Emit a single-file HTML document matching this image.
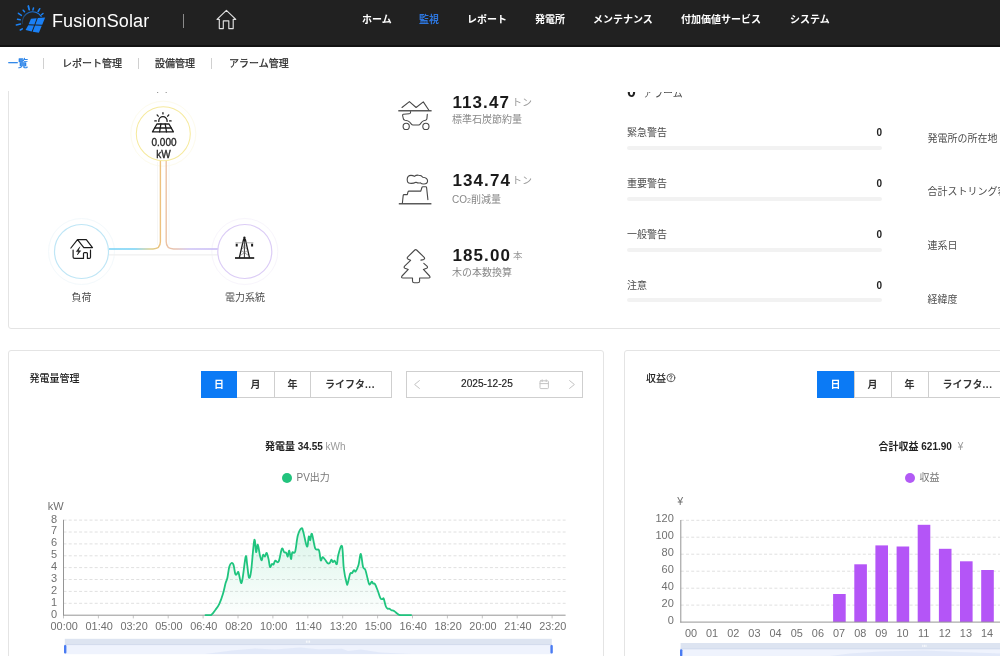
<!DOCTYPE html>
<html lang="ja">
<head>
<meta charset="utf-8">
<title>FusionSolar</title>
<style>
*{box-sizing:border-box;margin:0;padding:0}
html,body{width:1000px;height:656px;overflow:hidden;background:#fff}
body{position:relative;will-change:transform;font-family:"Liberation Sans","Noto Sans CJK JP",sans-serif;font-size:10px;color:#333;line-height:1}
.abs{position:absolute;white-space:nowrap}
#hdr{position:absolute;left:0;top:0;width:1000px;height:47px;background:#212121;border-bottom:2px solid #121212}
#hdr .nav{position:absolute;top:14px;height:12px;line-height:12px;color:#fff;font-weight:bold;font-size:10px;white-space:nowrap}
#hdr .nav.on{color:#2d76de}
#logo-text{position:absolute;left:52px;top:10.2px;font-size:18px;line-height:22px;color:#fff;letter-spacing:.12px}
#sub .it{position:absolute;top:58px;height:12px;line-height:12px;font-size:10px;color:#2b2b2b;white-space:nowrap;-webkit-text-stroke:.25px currentColor}
#sub .it.on{color:#1677e6}
#sub .sp{position:absolute;top:58px;width:1px;height:11px;background:#d0d0d0}
.card{position:absolute;border:1px solid #e4e4e4;border-radius:3px;background:#fff}
.lbl{position:absolute;white-space:nowrap;font-size:10px;line-height:12px}
.g5{color:#4c4c4c}.g8{color:#888}.g9{color:#999}
.big{position:absolute;white-space:nowrap;font-weight:bold;font-size:17px;line-height:20px;color:#1a1a1a;letter-spacing:1.1px}
.bar{position:absolute;left:627px;width:255px;height:4px;border-radius:2px;background:#f2f2f2}
.seg{position:absolute;top:371px;height:27px;border:1px solid #cfcfcf;background:#fff;text-align:center;line-height:25px;font-size:10px;font-weight:bold;color:#333;white-space:nowrap}
.seg.on{background:#0b7af5;border-color:#0b7af5;color:#fff;z-index:1}
</style>
</head>
<body>

<!-- HEADER -->
<div id="hdr">
  <svg class="abs" style="left:10px;top:0" width="50" height="40" viewBox="10 0 50 40">
    <defs><linearGradient id="lg" x1="22" y1="22" x2="42" y2="14" gradientUnits="userSpaceOnUse"><stop offset="0" stop-color="#1b82f5" stop-opacity=".25"/><stop offset=".5" stop-color="#1b82f5" stop-opacity=".8"/><stop offset="1" stop-color="#1b82f5"/></linearGradient></defs>
    <path d="M22.4 23.6 A10.3 10.3 0 0 1 41.2 16.4" fill="none" stroke="url(#lg)" stroke-width="1.1" stroke-linecap="round"/>
    <g stroke="#1b82f5" stroke-width="1.5" stroke-linecap="round" fill="none">
      <path d="M28.3 6 L29.2 9.6" stroke-width="1.8"/>
      <path d="M33.5 8 L32.9 10"/>
      <path d="M39.8 8.7 L38.1 11.5"/>
      <path d="M43 13.5 L41.5 14.8"/>
      <path d="M23.2 10.2 L24.5 11.8"/>
      <path d="M18.4 13.3 L21.4 15.4"/>
      <path d="M17.5 19.3 L20.2 19.8"/>
      <path d="M16.3 24.9 L20.5 24.1"/>
      <path d="M20.3 30 L22.3 28.8"/>
    </g>
    <g fill="#1a80f5">
      <path d="M31 18.7 L36.7 18.2 L34.4 24.4 L28.6 24.3 Z"/>
      <path d="M37.8 18.1 L45.2 17.5 L42.2 24.7 L35.4 24.4 Z"/>
      <path d="M28.2 25.3 L34 25.5 L31.7 31.5 L25.6 29.9 Z"/>
      <path d="M35 25.5 L41.8 25.7 L38.9 32.8 L32.7 31.7 Z"/>
    </g>
  </svg>
  <div id="logo-text">FusionSolar</div>
  <div class="abs" style="left:183px;top:14px;width:1px;height:14px;background:#8a8a8a"></div>
  <svg class="abs" style="left:215px;top:8px" width="23" height="23" viewBox="0 0 23 23" fill="none" stroke="#e0e0e0" stroke-width="1.15" stroke-linejoin="round" stroke-linecap="round">
    <path d="M11.4 2.3 L2 11.3 L4.3 11.3 L4.3 20.6 L8.3 20.6 L8.3 12.8 L13.8 12.8 L13.8 20.6 L18.2 20.6 L18.2 11.3 L20.8 11.3 Z"/>
  </svg>
  <div class="nav" style="left:362px">ホーム</div>
  <div class="nav on" style="left:419px">監視</div>
  <div class="nav" style="left:467px">レポート</div>
  <div class="nav" style="left:535px">発電所</div>
  <div class="nav" style="left:593px">メンテナンス</div>
  <div class="nav" style="left:681px">付加価値サービス</div>
  <div class="nav" style="left:790px">システム</div>
</div>

<!-- SUB NAV -->
<div id="sub">
  <div class="it on" style="left:8px">一覧</div>
  <div class="sp" style="left:43px"></div>
  <div class="it" style="left:62px">レポート管理</div>
  <div class="sp" style="left:138px"></div>
  <div class="it" style="left:155px">設備管理</div>
  <div class="sp" style="left:211px"></div>
  <div class="it" style="left:229px">アラーム管理</div>
</div>

<!-- TOP CARD (clipped at top) -->
<div class="abs" style="left:0;top:91px;width:1000px;height:244px;overflow:hidden">
  <div class="card" style="left:8px;top:-41px;width:1212px;height:279px"></div>
</div>

<!-- FLOW DIAGRAM -->
<svg class="abs" style="left:0;top:90px" width="360" height="230" viewBox="0 90 360 230" fill="none">
  <defs>
    <linearGradient id="gl" x1="109" y1="0" x2="161" y2="0" gradientUnits="userSpaceOnUse">
      <stop offset="0" stop-color="#74d1f5"/><stop offset=".5" stop-color="#74d1f5"/><stop offset=".8" stop-color="#dccf8c"/><stop offset="1" stop-color="#eec07c"/>
    </linearGradient>
    <linearGradient id="gr" x1="166" y1="0" x2="218" y2="0" gradientUnits="userSpaceOnUse">
      <stop offset="0" stop-color="#ecc2a2"/><stop offset=".2" stop-color="#e6c3b4"/><stop offset=".45" stop-color="#cbc0f5"/><stop offset="1" stop-color="#c7b9f5"/>
    </linearGradient>
  </defs>
  <!-- faint outer rings -->
  <circle cx="163.3" cy="133.7" r="32.5" stroke="#fdfbec" stroke-width="1"/>
  <circle cx="81.5" cy="251.5" r="33" stroke="#f3f9fc" stroke-width="1"/>
  <circle cx="244.8" cy="251.5" r="33" stroke="#f8f5fc" stroke-width="1"/>
  <!-- gray under line -->
  <path d="M109 254.8 H218" stroke="#efefef" stroke-width="1.2"/>
  <path d="M157.6 162 V245" stroke="#f6f6f6" stroke-width="1"/>
  <path d="M169 162 V245" stroke="#f6f6f6" stroke-width="1"/>
  <!-- flows -->
  <path d="M109 249 H153 Q160.4 249 160.4 241.6 V160.5" stroke="url(#gl)" stroke-width="1.4"/>
  <path d="M218 249 H173.6 Q166.2 249 166.2 241.6 V160.5" stroke="url(#gr)" stroke-width="1.4"/>
  <!-- circles -->
  <circle cx="163.3" cy="133.7" r="27" fill="#fff" stroke="#f6ea9e" stroke-width="1.05"/>
  <circle cx="81.5" cy="251.5" r="27" fill="#fff" stroke="#bfe6f6" stroke-width="1.2"/>
  <circle cx="244.8" cy="251.5" r="27" fill="#fff" stroke="#dccdf6" stroke-width="1.2"/>
  <!-- two dots above (clipped text) -->
  <rect x="157" y="92" width="1.2" height="1" fill="#999"/>
  <rect x="165.6" y="92" width="1.2" height="1" fill="#999"/>
  <!-- PV icon -->
  <g stroke="#1c1c1c" stroke-width="1.3" stroke-linecap="round" stroke-linejoin="round">
    <path d="M158.8 121.4 V120.8 A4.15 4.15 0 0 1 167.1 120.8 V121.4"/>
    <path d="M162.95 112.6 V113.9 M157.1 114.9 L158.2 116.2 M168.8 114.9 L167.7 116.2 M154.8 120.9 H156.3 M169.6 120.9 H171.1"/>
    <path d="M156.9 124 H169 L173.4 131.9 H152.5 Z"/>
    <path d="M160.9 124 L159.6 131.9 M165.2 124 L166.5 131.9 M154.8 128 H171.2"/>
  </g>
  <!-- load house icon -->
  <g stroke="#1c1c1c" stroke-width="1.2" stroke-linecap="round" stroke-linejoin="round">
    <path d="M70.9 248 L77.5 239.6 H86.3 L92.5 247.6 H83.8 L77.5 239.6"/>
    <path d="M73.1 250 V257 Q73.1 258.4 74.5 258.4 H83.5 V253.6 Q83.5 252.7 84.4 252.7 H86.5 Q87.4 252.7 87.4 253.6 V258.4 H89.4 Q90.5 258.4 90.5 257.3 V250.2"/>
    <path d="M79.7 247.1 L76.3 251.6 H78.7 L77.3 255 L80.7 250.8 H78.5 Z" fill="#1c1c1c" stroke-width=".5"/>
  </g>
  <!-- tower icon -->
  <g stroke="#1c1c1c" stroke-linecap="round" stroke-linejoin="round">
    <path d="M235 258 H254.2" stroke-width="1.7" stroke-linecap="butt"/>
    <path d="M244.4 237.6 V240" stroke-width="2.2"/>
    <path d="M243.5 239.6 L239.4 257.4 M245.4 239.6 L249.4 257.4" stroke-width="1.3"/>
    <path d="M244.4 240 V257.4" stroke-width=".9"/>
    <path d="M235.8 242.8 H253" stroke-width=".6" stroke="#777"/>
    <path d="M236.7 243.8 V246.6 M252.1 243.8 V246.6" stroke-width="2" stroke-linecap="butt"/>
    <path d="M242.6 245.4 L246.8 249 M246.2 245.4 L242 249 M241.4 250.6 L247.8 255 M247.4 250.6 L241 255" stroke-width=".6" stroke="#666"/>
  </g>
</svg>
<div class="lbl" style="left:151.5px;top:137px;width:24px;text-align:center;font-weight:normal;-webkit-text-stroke:.35px #2a2a2a;color:#2a2a2a;font-size:10px">0.000</div>
<div class="lbl" style="left:151.5px;top:149.2px;width:24px;text-align:center;font-weight:normal;-webkit-text-stroke:.35px #2a2a2a;color:#2a2a2a;font-size:10px">kW</div>
<div class="lbl g5" style="left:71.5px;top:291.5px">負荷</div>
<div class="lbl g5" style="left:225px;top:291.5px">電力系統</div>

<!-- ENV BENEFITS -->
<svg class="abs" style="left:396px;top:98px" width="40" height="190" viewBox="396 98 40 190" fill="none" stroke="#484848" stroke-width="1.1" stroke-linecap="round" stroke-linejoin="round">
  <!-- coal cart -->
  <path d="M398.3 110.8 H431.6" stroke-width="1.4" stroke="#5a5a5a" stroke-linecap="butt"/>
  <path d="M402 107.5 L409.4 101.6 L416.1 107.5 L423.3 101.9 L428.9 110.2"/>
  <path d="M410.5 111.6 V112.8 Q410.4 113.8 409.2 113.8 L403.4 114.3 Q402.4 114.5 402.6 115.5 L403.4 119 Q403.7 120 405 120.2 Q408.4 120.6 409.6 122 L411.4 124.2 Q412 125 413 125 H418.6 Q419.6 125 420.2 124.2 L421.8 122 Q423 120.6 425.6 120.2 Q426.8 120 426.9 118.8 L427.3 114.4"/>
  <circle cx="406.2" cy="126.4" r="3.1"/>
  <circle cx="425.9" cy="126.4" r="3.1"/>
  <!-- factory -->
  <path d="M398.8 203.8 H431.4" stroke-width="1.4" stroke="#5a5a5a" stroke-linecap="butt"/>
  <path d="M402.4 203 L403.2 195.4 Q403.3 194.6 404.1 194.6 H407.3 L408 191.8 Q408.2 191.1 409 191.1 H420.8 L421.9 187.5 Q422.1 186.8 422.9 186.8 H425.8 Q426.5 186.8 426.6 187.6 L427.9 199.6"/>
  <path d="M410 183.3 Q407.2 183.1 407.2 179.4 Q407.4 175.4 411 175.4 Q413.2 175.4 414.4 176.4 Q416 175 418.6 175.2 Q421.6 175.2 422.8 177.2 Q427.4 177.6 427.6 181 Q427.4 184 424 184 Q421.8 184.2 420.4 182.8 Q418.4 183.4 416 182.2 Q413 183.7 410 183.3 Z"/>
  <!-- tree -->
  <path d="M420.9 260.1 L423.4 259.6 Q425.4 258.8 424.2 257.3 L416.6 250 Q415.7 249.2 414.8 250 L407.8 256.9 Q406.4 258.4 408.2 259.2 L410.6 260.3 L404.6 266.2 Q403.4 267.6 405 268.3 L408.3 269.4 L402 276 Q400.8 277.8 403 278 H412.5 V281 Q412.5 282.8 414.3 282.8 H417.8 Q419.6 282.8 419.6 281 V278 H428.6 Q430.8 277.8 429.6 276 L423.4 269.4 L426.6 268.3 Q428.2 267.6 427 266.2 L423.8 263.3"/>
</svg>
<div class="big" style="left:452.4px;top:93.2px">113.47</div>
<div class="lbl g9" style="left:512px;top:97px;font-size:10px">トン</div>
<div class="lbl g8" style="left:452px;top:114px">標準石炭節約量</div>
<div class="big" style="left:452.4px;top:171.2px">134.74</div>
<div class="lbl g9" style="left:512px;top:175px;font-size:10px">トン</div>
<div class="lbl g8" style="left:452px;top:193.5px">CO<span style="font-size:7px">2</span>削減量</div>
<div class="big" style="left:452.4px;top:246.2px">185.00</div>
<div class="lbl g9" style="left:513px;top:250px;font-size:9.5px">本</div>
<div class="lbl g8" style="left:452px;top:266.5px">木の本数換算</div>

<!-- ALARMS -->
<div class="abs" style="left:620px;top:92px;width:80px;height:9px;overflow:hidden">
  <div class="abs" style="left:7px;top:-7.8px;font-size:16px;font-weight:bold;color:#222;line-height:16px">0</div>
  <div class="abs g5" style="left:23px;top:-3.8px;font-size:10px;line-height:12px">アラーム</div>
</div>
<div class="lbl g5" style="left:627px;top:127px">緊急警告</div>
<div class="lbl" style="left:862px;width:20px;text-align:right;top:127px;font-weight:bold;color:#222">0</div>
<div class="bar" style="top:146px"></div>
<div class="lbl g5" style="left:627px;top:178px">重要警告</div>
<div class="lbl" style="left:862px;width:20px;text-align:right;top:178px;font-weight:bold;color:#222">0</div>
<div class="bar" style="top:197px"></div>
<div class="lbl g5" style="left:627px;top:228.5px">一般警告</div>
<div class="lbl" style="left:862px;width:20px;text-align:right;top:228.5px;font-weight:bold;color:#222">0</div>
<div class="bar" style="top:247.5px"></div>
<div class="lbl g5" style="left:627px;top:279.5px">注意</div>
<div class="lbl" style="left:862px;width:20px;text-align:right;top:279.5px;font-weight:bold;color:#222">0</div>
<div class="bar" style="top:298px"></div>

<!-- STATION INFO -->
<div class="lbl g5" style="left:927.5px;top:133px">発電所の所在地</div>
<div class="lbl g5" style="left:927.5px;top:186px">合計ストリング容量</div>
<div class="lbl g5" style="left:927.5px;top:240px">連系日</div>
<div class="lbl g5" style="left:927.5px;top:293.5px">経緯度</div>

<!-- CARD 2 : 発電量管理 -->
<div class="card" style="left:8px;top:350px;width:596px;height:320px"></div>
<div class="lbl" style="left:29.5px;top:373px;color:#222;font-weight:500">発電量管理</div>
<div class="seg on" style="left:201px;width:36px">日</div>
<div class="seg" style="left:236px;width:39px">月</div>
<div class="seg" style="left:274px;width:37px">年</div>
<div class="seg" style="left:310px;width:82px;padding-right:2px">ライフタ<span style="letter-spacing:.5px">...</span></div>
<div class="abs" style="left:406px;top:371px;width:177px;height:27px;border:1px solid #cfcfcf;background:#fff"></div>
<svg class="abs" style="left:406px;top:371px" width="177" height="27" viewBox="0 0 177 27" fill="none" stroke="#c4c4c4" stroke-width="1" stroke-linecap="round" stroke-linejoin="round">
  <path d="M13.4 9.6 L8.6 13.5 L13.4 17.4"/>
  <path d="M163.6 9.6 L168.4 13.5 L163.6 17.4"/>
  <rect x="134" y="9.8" width="8.4" height="7.8" rx=".8"/>
  <path d="M134 12.6 H142.4 M136.2 8.8 V10.6 M140.2 8.8 V10.6"/>
</svg>
<div class="lbl" style="left:461px;top:378px;color:#222;font-size:10.15px;-webkit-text-stroke:.15px #222">2025-12-25</div>
<div class="lbl" style="left:265px;top:440.5px;color:#222"><b>発電量 34.55</b> <span class="g9">kWh</span></div>
<div class="abs" style="left:281.7px;top:472.7px;width:10.4px;height:10.4px;border-radius:50%;background:#22c37d"></div>
<div class="lbl" style="left:296.5px;top:472px;color:#777">PV出力</div>

<!-- CARD 3 : 収益 -->
<div class="abs" style="left:620px;top:345px;width:380px;height:311px;overflow:hidden">
  <div class="card" style="left:4px;top:5px;width:596px;height:320px"></div>
</div>
<div class="lbl" style="left:646px;top:373px;color:#222;font-weight:500">収益</div>
<svg class="abs" style="left:666px;top:373px" width="10" height="10" viewBox="0 0 10 10" fill="none" stroke="#4a4a4a" stroke-width=".9" stroke-linecap="round">
  <circle cx="4.9" cy="4.8" r="3.9"/>
  <path d="M3.6 3.8 Q3.7 2.6 4.9 2.6 Q6.2 2.7 6.1 3.8 Q6 4.5 4.9 5 V5.8"/>
  <path d="M4.9 7 V7.1"/>
</svg>
<div class="seg on" style="left:817px;width:37px">日</div>
<div class="seg" style="left:853.5px;width:38px">月</div>
<div class="seg" style="left:890.5px;width:38px">年</div>
<div class="seg" style="left:927.5px;width:82px;padding-right:2px">ライフタ<span style="letter-spacing:.5px">...</span></div>
<div class="lbl" style="left:878.5px;top:440.5px;color:#222"><b>合計収益 621.90</b> <span class="g9" style="margin-left:3px">¥</span></div>
<div class="abs" style="left:904.7px;top:472.7px;width:10.4px;height:10.4px;border-radius:50%;background:#b25af5"></div>
<div class="lbl" style="left:919.5px;top:472px;color:#777">収益</div>

<!-- CHART-L -->
<svg class="abs" style="left:0;top:490px" width="610" height="166" viewBox="0 490 610 166" fill="none" font-family="Liberation Sans, Noto Sans CJK JP, sans-serif">
<defs><linearGradient id="ga" x1="0" y1="525" x2="0" y2="615" gradientUnits="userSpaceOnUse"><stop offset="0" stop-color="#22c37d" stop-opacity=".17"/><stop offset="1" stop-color="#22c37d" stop-opacity=".01"/></linearGradient></defs>
<path d="M63.5 603.3 H565.6 M63.5 591.4 H565.6 M63.5 579.5 H565.6 M63.5 567.6 H565.6 M63.5 555.8 H565.6 M63.5 543.9 H565.6 M63.5 532.0 H565.6 M63.5 520.1 H565.6" stroke="#e0e0e0" stroke-width="1" stroke-dasharray="3 2.2"/>
<path d="M63.5 519.8 V615.7" stroke="#959595" stroke-width="1"/>
<path d="M63.5 615.5 V618.4 M98.4 615.5 V618.4 M133.3 615.5 V618.4 M168.2 615.5 V618.4 M203.1 615.5 V618.4 M238.0 615.5 V618.4 M272.9 615.5 V618.4 M307.8 615.5 V618.4 M342.7 615.5 V618.4 M377.6 615.5 V618.4 M412.5 615.5 V618.4 M447.4 615.5 V618.4 M482.3 615.5 V618.4 M517.2 615.5 V618.4 M552.1 615.5 V618.4" stroke="#c4c4c4" stroke-width="1"/>
<path d="M63.0 615.2 H565.6" stroke="#959595" stroke-width="1"/>
<g fill="#707070" font-size="11" text-anchor="end">
<text x="57" y="617.6">0</text>
<text x="57" y="605.7">1</text>
<text x="57" y="593.8">2</text>
<text x="57" y="581.9">3</text>
<text x="57" y="570.0">4</text>
<text x="57" y="558.1">5</text>
<text x="57" y="546.3">6</text>
<text x="57" y="534.4">7</text>
<text x="57" y="522.5">8</text>
</g>
<text x="47.7" y="509.6" fill="#707070" font-size="11">kW</text>
<g fill="#707070" font-size="10.9" text-anchor="middle">
<text x="64.2" y="629.9">00:00</text>
<text x="99.2" y="629.9">01:40</text>
<text x="134.1" y="629.9">03:20</text>
<text x="168.9" y="629.9">05:00</text>
<text x="203.8" y="629.9">06:40</text>
<text x="238.8" y="629.9">08:20</text>
<text x="273.6" y="629.9">10:00</text>
<text x="308.5" y="629.9">11:40</text>
<text x="343.4" y="629.9">13:20</text>
<text x="378.3" y="629.9">15:00</text>
<text x="413.2" y="629.9">16:40</text>
<text x="448.1" y="629.9">18:20</text>
<text x="483.0" y="629.9">20:00</text>
<text x="518.0" y="629.9">21:40</text>
<text x="552.8" y="629.9">23:20</text>
</g>
<path d="M205.5 615.1 C206.5 615.1 209.2 615.1 211.0 615.1 C212.8 614.2 214.1 611.6 215.5 609.7 C216.9 607.8 217.9 606.9 219.2 604.2 C220.5 601.5 221.8 597.8 222.9 594.1 C224.0 590.4 224.8 586.0 225.6 583.1 C226.4 580.2 226.8 580.6 227.4 577.7 C228.0 574.8 228.6 569.3 229.3 566.7 C230.0 564.1 230.8 563.3 231.5 563.0 C232.2 562.7 232.8 563.0 233.5 564.9 C234.2 566.8 234.7 572.4 235.3 574.0 C235.9 575.6 236.4 574.3 236.9 574.0 C237.4 573.7 237.7 570.8 238.4 572.2 C239.1 573.6 240.1 580.9 240.8 582.2 C241.5 583.5 241.5 584.0 242.4 579.5 C243.3 575.0 244.9 559.2 245.7 556.6 C246.5 554.0 246.6 561.2 247.2 564.9 C247.8 568.6 248.3 576.8 249.0 577.7 C249.7 578.6 250.3 576.9 251.2 570.3 C252.1 563.7 253.4 543.4 254.3 540.2 C255.2 537.0 255.5 551.3 256.1 552.1 C256.7 552.9 257.1 544.1 257.8 544.7 C258.5 545.3 259.3 553.0 260.0 555.7 C260.7 558.4 261.3 560.5 261.8 560.3 C262.3 560.1 262.6 555.4 263.1 554.8 C263.6 554.2 264.3 556.9 264.9 556.6 C265.5 556.3 266.1 552.5 266.7 553.0 C267.3 553.5 268.0 556.9 268.6 559.4 C269.2 561.9 269.4 566.2 270.0 567.0 C270.6 567.8 271.3 564.3 271.9 563.9 C272.5 563.5 272.9 565.1 273.5 564.5 C274.1 563.9 274.4 561.1 275.3 560.6 C276.2 560.1 277.4 563.7 278.6 561.6 C279.8 559.5 280.9 550.5 281.9 548.8 C282.9 547.1 283.3 551.4 284.1 552.1 C284.9 552.8 285.7 552.2 286.3 553.0 C286.9 553.8 287.3 557.0 287.8 556.6 C288.3 556.2 288.6 550.2 289.2 550.6 C289.8 551.0 290.5 558.7 291.0 559.0 C291.5 559.3 291.6 553.7 292.3 552.4 C293.0 551.1 294.1 554.6 295.1 551.7 C296.1 548.8 296.7 539.7 297.8 535.6 C298.9 531.5 300.5 528.9 301.5 528.3 C302.5 527.7 302.3 528.7 303.3 531.9 C304.3 535.1 306.0 545.8 307.0 546.6 C308.0 547.4 308.2 537.6 308.8 536.5 C309.4 535.4 309.8 540.7 310.3 540.2 C310.8 539.7 311.0 532.4 311.9 533.8 C312.8 535.2 314.0 545.5 315.2 548.4 C316.4 551.3 317.9 548.1 318.9 550.2 C319.9 552.3 320.1 559.1 320.7 560.3 C321.3 561.5 321.8 557.4 322.5 557.2 C323.2 557.0 323.7 558.0 324.6 559.0 C325.5 560.0 326.5 562.3 327.4 563.0 C328.3 563.7 329.0 563.6 329.7 563.0 C330.4 562.4 330.8 559.9 331.4 559.7 C332.0 559.5 332.3 561.9 332.9 562.1 C333.5 562.3 334.0 560.4 334.7 560.8 C335.4 561.1 336.3 565.1 336.9 564.1 C337.5 563.1 337.4 557.9 338.3 554.8 C339.2 551.7 341.0 543.8 342.0 546.2 C343.0 548.6 343.0 562.0 343.8 568.5 C344.6 575.0 345.9 580.5 346.6 583.1 C347.3 585.7 347.2 584.8 347.8 583.1 C348.4 581.4 349.4 575.4 350.2 573.6 C351.0 571.9 351.5 573.7 352.1 573.1 C352.7 572.5 353.3 570.6 353.9 570.3 C354.5 570.0 354.9 572.2 355.7 571.3 C356.5 570.4 357.6 567.9 358.5 564.9 C359.4 561.9 360.0 553.6 360.8 553.9 C361.6 554.2 362.2 563.9 363.0 566.7 C363.8 569.5 364.6 567.9 365.4 570.0 C366.2 572.1 366.9 576.0 367.6 578.6 C368.3 581.2 368.7 584.1 369.4 584.6 C370.1 585.1 371.2 581.9 371.8 581.7 C372.4 581.5 372.6 583.1 373.1 583.5 C373.6 583.9 374.1 582.9 374.9 584.1 C375.7 585.3 376.7 588.0 377.7 590.5 C378.7 593.0 379.6 596.6 380.4 598.1 C381.2 599.6 381.6 599.1 382.2 599.2 C382.8 599.3 383.1 597.4 383.7 598.7 C384.3 600.0 385.2 604.8 385.9 606.5 C386.6 608.2 387.1 608.3 387.7 608.7 C388.3 609.1 388.9 608.4 389.5 608.7 C390.1 609.0 390.6 609.8 391.4 610.2 C392.2 610.6 392.8 610.3 394.1 611.1 C395.4 611.9 397.4 613.9 398.7 614.6 C400.0 615.1 399.2 615.0 401.4 615.1 C403.6 615.1 409.4 615.1 411.1 615.1 L411.1 615.1 L205.5 615.1 Z" fill="url(#ga)"/>
<path d="M205.5 615.1 C206.5 615.1 209.2 615.1 211.0 615.1 C212.8 614.2 214.1 611.6 215.5 609.7 C216.9 607.8 217.9 606.9 219.2 604.2 C220.5 601.5 221.8 597.8 222.9 594.1 C224.0 590.4 224.8 586.0 225.6 583.1 C226.4 580.2 226.8 580.6 227.4 577.7 C228.0 574.8 228.6 569.3 229.3 566.7 C230.0 564.1 230.8 563.3 231.5 563.0 C232.2 562.7 232.8 563.0 233.5 564.9 C234.2 566.8 234.7 572.4 235.3 574.0 C235.9 575.6 236.4 574.3 236.9 574.0 C237.4 573.7 237.7 570.8 238.4 572.2 C239.1 573.6 240.1 580.9 240.8 582.2 C241.5 583.5 241.5 584.0 242.4 579.5 C243.3 575.0 244.9 559.2 245.7 556.6 C246.5 554.0 246.6 561.2 247.2 564.9 C247.8 568.6 248.3 576.8 249.0 577.7 C249.7 578.6 250.3 576.9 251.2 570.3 C252.1 563.7 253.4 543.4 254.3 540.2 C255.2 537.0 255.5 551.3 256.1 552.1 C256.7 552.9 257.1 544.1 257.8 544.7 C258.5 545.3 259.3 553.0 260.0 555.7 C260.7 558.4 261.3 560.5 261.8 560.3 C262.3 560.1 262.6 555.4 263.1 554.8 C263.6 554.2 264.3 556.9 264.9 556.6 C265.5 556.3 266.1 552.5 266.7 553.0 C267.3 553.5 268.0 556.9 268.6 559.4 C269.2 561.9 269.4 566.2 270.0 567.0 C270.6 567.8 271.3 564.3 271.9 563.9 C272.5 563.5 272.9 565.1 273.5 564.5 C274.1 563.9 274.4 561.1 275.3 560.6 C276.2 560.1 277.4 563.7 278.6 561.6 C279.8 559.5 280.9 550.5 281.9 548.8 C282.9 547.1 283.3 551.4 284.1 552.1 C284.9 552.8 285.7 552.2 286.3 553.0 C286.9 553.8 287.3 557.0 287.8 556.6 C288.3 556.2 288.6 550.2 289.2 550.6 C289.8 551.0 290.5 558.7 291.0 559.0 C291.5 559.3 291.6 553.7 292.3 552.4 C293.0 551.1 294.1 554.6 295.1 551.7 C296.1 548.8 296.7 539.7 297.8 535.6 C298.9 531.5 300.5 528.9 301.5 528.3 C302.5 527.7 302.3 528.7 303.3 531.9 C304.3 535.1 306.0 545.8 307.0 546.6 C308.0 547.4 308.2 537.6 308.8 536.5 C309.4 535.4 309.8 540.7 310.3 540.2 C310.8 539.7 311.0 532.4 311.9 533.8 C312.8 535.2 314.0 545.5 315.2 548.4 C316.4 551.3 317.9 548.1 318.9 550.2 C319.9 552.3 320.1 559.1 320.7 560.3 C321.3 561.5 321.8 557.4 322.5 557.2 C323.2 557.0 323.7 558.0 324.6 559.0 C325.5 560.0 326.5 562.3 327.4 563.0 C328.3 563.7 329.0 563.6 329.7 563.0 C330.4 562.4 330.8 559.9 331.4 559.7 C332.0 559.5 332.3 561.9 332.9 562.1 C333.5 562.3 334.0 560.4 334.7 560.8 C335.4 561.1 336.3 565.1 336.9 564.1 C337.5 563.1 337.4 557.9 338.3 554.8 C339.2 551.7 341.0 543.8 342.0 546.2 C343.0 548.6 343.0 562.0 343.8 568.5 C344.6 575.0 345.9 580.5 346.6 583.1 C347.3 585.7 347.2 584.8 347.8 583.1 C348.4 581.4 349.4 575.4 350.2 573.6 C351.0 571.9 351.5 573.7 352.1 573.1 C352.7 572.5 353.3 570.6 353.9 570.3 C354.5 570.0 354.9 572.2 355.7 571.3 C356.5 570.4 357.6 567.9 358.5 564.9 C359.4 561.9 360.0 553.6 360.8 553.9 C361.6 554.2 362.2 563.9 363.0 566.7 C363.8 569.5 364.6 567.9 365.4 570.0 C366.2 572.1 366.9 576.0 367.6 578.6 C368.3 581.2 368.7 584.1 369.4 584.6 C370.1 585.1 371.2 581.9 371.8 581.7 C372.4 581.5 372.6 583.1 373.1 583.5 C373.6 583.9 374.1 582.9 374.9 584.1 C375.7 585.3 376.7 588.0 377.7 590.5 C378.7 593.0 379.6 596.6 380.4 598.1 C381.2 599.6 381.6 599.1 382.2 599.2 C382.8 599.3 383.1 597.4 383.7 598.7 C384.3 600.0 385.2 604.8 385.9 606.5 C386.6 608.2 387.1 608.3 387.7 608.7 C388.3 609.1 388.9 608.4 389.5 608.7 C390.1 609.0 390.6 609.8 391.4 610.2 C392.2 610.6 392.8 610.3 394.1 611.1 C395.4 611.9 397.4 613.9 398.7 614.6 C400.0 615.1 399.2 615.0 401.4 615.1 C403.6 615.1 409.4 615.1 411.1 615.1" stroke="#1fc47e" stroke-width="1.8" stroke-linejoin="round" stroke-linecap="round"/>
<rect x="64.8" y="638.8" width="487" height="5.8" fill="#dde4f1"/>
<rect x="64.8" y="644.6" width="487" height="9.6" fill="#eff3fd"/>
<path d="M64.8 644.6 H551.8" stroke="#c9d3e8" stroke-width=".8"/>
<path d="M205 654 L232 650.5 L255 648.6 L275 649.6 L300 647.6 L318 649.2 L342 648.8 L348 651 L361 649.4 L380 652.4 L411 654 Z" fill="#dfe6f7" opacity=".8"/>
<rect x="64" y="645" width="2.4" height="8.6" rx="1" fill="#4a7bf2"/>
<rect x="550.4" y="645" width="2.4" height="8.6" rx="1" fill="#4a7bf2"/>
<path d="M306.4 640.6 V642.8 M308 640.6 V642.8 M309.6 640.6 V642.8" stroke="#fff" stroke-width=".8"/>
</svg>
<!-- /CHART-L -->
<!-- CHART-R -->
<svg class="abs" style="left:630px;top:490px" width="370" height="166" viewBox="630 490 370 166" fill="none" font-family="Liberation Sans, Noto Sans CJK JP, sans-serif">
<path d="M680.8 605.1 H1000 M680.8 588.2 H1000 M680.8 571.2 H1000 M680.8 554.2 H1000 M680.8 537.2 H1000 M680.8 520.3 H1000" stroke="#e0e0e0" stroke-width="1" stroke-dasharray="3 2.2"/>
<rect x="833.1" y="594.0" width="12.6" height="28.1" fill="#b455f7"/>
<rect x="854.3" y="564.3" width="12.6" height="57.8" fill="#b455f7"/>
<rect x="875.4" y="545.4" width="12.6" height="76.7" fill="#b455f7"/>
<rect x="896.6" y="546.5" width="12.6" height="75.6" fill="#b455f7"/>
<rect x="917.7" y="524.8" width="12.6" height="97.3" fill="#b455f7"/>
<rect x="938.9" y="548.8" width="12.6" height="73.3" fill="#b455f7"/>
<rect x="960.0" y="561.3" width="12.6" height="60.8" fill="#b455f7"/>
<rect x="981.2" y="570.0" width="12.6" height="52.1" fill="#b455f7"/>
<path d="M680.8 520 V622.6" stroke="#959595" stroke-width="1"/>
<path d="M680.3 622.1 H1000" stroke="#959595" stroke-width="1"/>
<g fill="#707070" font-size="11" text-anchor="end">
<text x="673.8" y="624.2">0</text>
<text x="673.8" y="607.2">20</text>
<text x="673.8" y="590.3">40</text>
<text x="673.8" y="573.3">60</text>
<text x="673.8" y="556.3">80</text>
<text x="673.8" y="539.4">100</text>
<text x="673.8" y="522.4">120</text>
</g>
<text x="680.3" y="504.6" fill="#707070" font-size="10.6" text-anchor="middle">¥</text>
<g fill="#707070" font-size="10.9" text-anchor="middle">
<text x="691.0" y="636.6">00</text>
<text x="712.1" y="636.6">01</text>
<text x="733.3" y="636.6">02</text>
<text x="754.4" y="636.6">03</text>
<text x="775.6" y="636.6">04</text>
<text x="796.7" y="636.6">05</text>
<text x="817.9" y="636.6">06</text>
<text x="839.0" y="636.6">07</text>
<text x="860.2" y="636.6">08</text>
<text x="881.3" y="636.6">09</text>
<text x="902.5" y="636.6">10</text>
<text x="923.6" y="636.6">11</text>
<text x="944.8" y="636.6">12</text>
<text x="965.9" y="636.6">13</text>
<text x="987.1" y="636.6">14</text>
</g>
<rect x="680.6" y="643" width="320" height="5.8" fill="#dde4f1"/>
<rect x="680.6" y="648.8" width="320" height="8" fill="#eff3fd"/>
<path d="M680.6 648.8 H1000" stroke="#c9d3e8" stroke-width=".8"/>
<path d="M830 656 L850 653.6 L880 651.6 L924 650.4 L960 652 L1000 653.6 V656 Z" fill="#dfe6f7" opacity=".8"/>
<rect x="680" y="649.2" width="2.4" height="7" rx="1" fill="#4a7bf2"/>
<path d="M922.8 644.8 V647 M924.4 644.8 V647 M926 644.8 V647" stroke="#fff" stroke-width=".8"/>
</svg>
<!-- /CHART-R -->
</body>
</html>
